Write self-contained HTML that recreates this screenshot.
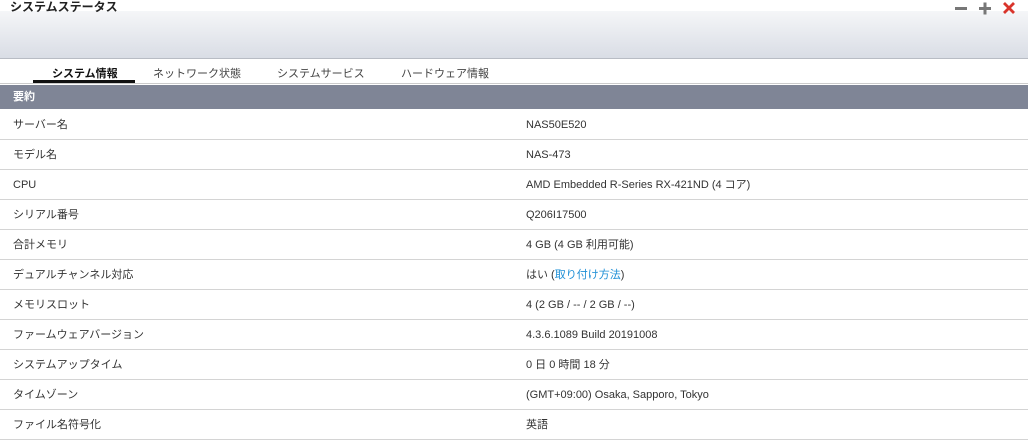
<!DOCTYPE html>
<html><head><meta charset="utf-8"><style>
*{margin:0;padding:0;box-sizing:border-box}
body{width:1028px;height:440px;overflow:hidden;background:#fff;font-family:"Liberation Sans","Noto Sans CJK JP",sans-serif;color:#333;position:relative}
.title{position:absolute;left:10px;top:0;font-size:12px;font-weight:bold;color:#222;line-height:14px}
.band{position:absolute;left:0;top:11px;width:1028px;height:48px;background:linear-gradient(#f5f6f8,#d9dde5);border-bottom:1px solid #b8bcc4}
.tabs{position:absolute;top:66px;left:0;width:1028px;height:18px;border-bottom:1px solid #ccc;font-size:11px;color:#444}
.tab{position:absolute;top:0;line-height:16px}
.ul{position:absolute;left:33px;top:80px;width:102px;height:3px;background:#111}
.hdr{position:absolute;left:0;top:85px;width:1028px;height:24px;background:#7f8596;color:#fff;font-weight:bold;font-size:11px;line-height:24px;padding-left:13px}
.row{position:absolute;left:0;width:1028px;height:30px;border-bottom:1px solid #d4d4d4;font-size:11px;line-height:30px}
.row span{position:absolute;left:13px}
.row b{position:absolute;left:526px;font-weight:normal}
a{color:#1e8fd6;text-decoration:none}
</style></head><body>
<div class="band"></div>
<div class="title">システムステータス</div>
<svg style="position:absolute;left:950px;top:1px" width="70" height="14" viewBox="0 0 70 14">
<rect x="5" y="6" width="12" height="3" fill="#777"/>
<rect x="29" y="6" width="12" height="3" fill="#777"/>
<rect x="33.5" y="1.5" width="3" height="12" fill="#777"/>
<path d="M54 2L64 12M64 2L54 12" stroke="#d9342b" stroke-width="2.8"/>
</svg>
<div class="tabs">
<div class="tab" style="left:52px;font-weight:bold;color:#111">システム情報</div>
<div class="tab" style="left:153px">ネットワーク状態</div>
<div class="tab" style="left:277px">システムサービス</div>
<div class="tab" style="left:401px">ハードウェア情報</div>
</div>
<div class="ul"></div>
<div class="hdr">要約</div>
<div class="row" style="top:110px"><span>サーバー名</span><b>NAS50E520</b></div>
<div class="row" style="top:140px"><span>モデル名</span><b>NAS-473</b></div>
<div class="row" style="top:170px"><span>CPU</span><b>AMD Embedded R-Series RX-421ND (4 コア)</b></div>
<div class="row" style="top:200px"><span>シリアル番号</span><b>Q206I17500</b></div>
<div class="row" style="top:230px"><span>合計メモリ</span><b>4 GB (4 GB 利用可能)</b></div>
<div class="row" style="top:260px"><span>デュアルチャンネル対応</span><b>はい (<a>取り付け方法</a>)</b></div>
<div class="row" style="top:290px"><span>メモリスロット</span><b>4 (2 GB / -- / 2 GB / --)</b></div>
<div class="row" style="top:320px"><span>ファームウェアバージョン</span><b>4.3.6.1089 Build 20191008</b></div>
<div class="row" style="top:350px"><span>システムアップタイム</span><b>0 日 0 時間 18 分</b></div>
<div class="row" style="top:380px"><span>タイムゾーン</span><b>(GMT+09:00) Osaka, Sapporo, Tokyo</b></div>
<div class="row" style="top:410px"><span>ファイル名符号化</span><b>英語</b></div>
</body></html>
